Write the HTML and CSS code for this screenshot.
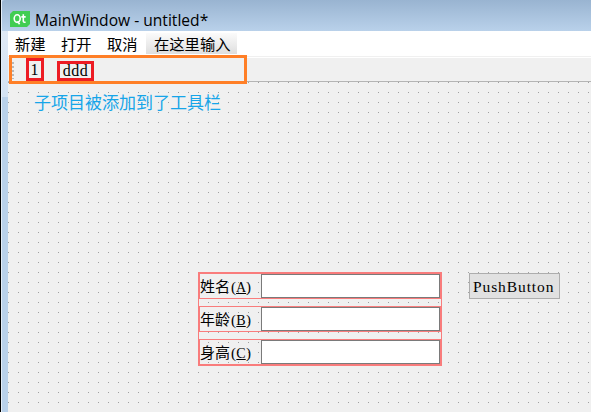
FILE: index.html
```
<!DOCTYPE html>
<html lang="zh-CN">
<head>
<meta charset="utf-8">
<title>MainWindow</title>
<link rel="stylesheet" href="styles.css">
</head>
<body>
<div class="window">
  <header class="titlebar">
    <svg class="logo" width="20" height="16" viewBox="0 0 20 16"><path d="M3 0H20V13L17 16H0V3Z" fill="#41cd52"/><g fill="none" stroke="#fff" stroke-width="1.6"><ellipse cx="7.2" cy="7.6" rx="3" ry="3.8"/><path d="M7.6 10.2L9.6 13.2M13.3 3.2V10Q13.3 11.5 15.6 11.3M11.3 5.9H15.7"/></g></svg>
    <span class="title">MainWindow - untitled*</span>
  </header>
  <div class="frame">
    <nav class="menubar">
      <span class="menu m1">新建</span><span class="menu m2">打开</span><span class="menu m3">取消</span><span class="type-here"><span class="menu">在这里输入</span></span>
    </nav>
    <div class="toolbar">
      <i class="grip"></i>
      <div class="outline"></div>
      <span class="action one">1</span>
      <span class="action ddd">ddd</span>
    </div>
    <main class="canvas">
      <svg class="dots" width="583" height="330" shape-rendering="crispEdges"><defs><pattern id="grid" width="10" height="10" patternUnits="userSpaceOnUse"><rect width="1" height="1" fill="#a0a0a0"/></pattern></defs><rect width="583" height="330" fill="url(#grid)"/></svg>
      <p class="note">子项目被添加到了工具栏</p>
      <div class="form">
        <div class="row"><label>姓名<span class="key">(<u>A</u>)</span></label><div class="field"></div></div>
        <div class="row"><label>年龄<span class="key">(<u>B</u>)</span></label><div class="field"></div></div>
        <div class="row"><label>身高<span class="key">(<u>C</u>)</span></label><div class="field"></div></div>
      </div>
      <div class="push">PushButton</div>
    </main>
  </div>
</div>
</body>
</html>
```
FILE: styles.css
```
* { box-sizing: border-box; }
body { margin: 0; overflow: hidden; color: #000; }
.window {
  width: 591px; height: 412px; display: flex; flex-direction: column;
  background: linear-gradient(#dfe9f5, #d3e2f3) 1px 31px / 6px 66px no-repeat, #b9d1ea;
  border-left: 1px solid #000; box-shadow: inset 1px 0 #e4eef8;
}
.titlebar {
  height: 31px; flex: none; display: flex; align-items: flex-start;
  padding: 11px 0 0 9px; margin-left: 1px;
  background: linear-gradient(#99b4d1, #b9d1ea); border-top-left-radius: 3px;
}
.logo { display: block; flex: none; margin-left: -1px; }
.title {
  font: 15.6px/20px "Open Sans", "Noto Sans", sans-serif;
  margin: -1px 0 0 5px; white-space: nowrap;
}
.frame { flex: 1; margin-left: 7px; display: flex; flex-direction: column; }
.menubar {
  height: 27px; flex: none; display: flex; padding: 2px 0 0 7px;
  background: linear-gradient(#f0f0f0, #f0f0f0) 0 25px / 100% 1px no-repeat, #fff;
}
.menu {
  font: 15.3px/21px "Noto Sans CJK SC", sans-serif; white-space: nowrap;
}
.m1, .m2, .m3 { width: 46px; }
.type-here {
  width: 91px; height: 21px; padding-left: 8px; margin-left: -7px;
  background: linear-gradient(#fbfbfb, #dedede);
}
.type-here .menu { display: block; line-height: 20px; }
.toolbar {
  height: 24px; flex: none; position: relative; background: #f0f0f0;
  border-bottom: 1px solid #b4b4b4;
}
.grip {
  position: absolute; left: 4px; top: 4px; width: 2px; height: 17px;
  background: repeating-linear-gradient(#b8b8b8 0 2px, #f0f0f0 2px 4px);
}
.outline {
  position: absolute; z-index: 1; left: 1px; top: -3px; width: 238px; height: 29px;
  border: 3px solid #ff7f27;
}
.action {
  position: absolute; z-index: 2; border: 3px solid #ed1c24;
  font: 16px/18px "Liberation Serif", serif; text-align: center;
}
.one { left: 18px; top: 0; width: 18px; height: 23px; padding-right: 1px; }
.ddd { left: 49px; top: 3px; width: 37px; height: 20px; line-height: 13px; letter-spacing: 0.5px; }
.canvas { flex: 1; position: relative; background: #f0f0f0; }
.dots { position: absolute; left: 0; top: 0; }
.note {
  position: absolute; left: 26px; top: 7px; margin: 0; white-space: nowrap;
  font: 17px/25px "Noto Sans CJK SC", sans-serif; color: #16a5e9;
}
.form {
  position: absolute; left: 190px; top: 190px; width: 244px; height: 94px;
  border: 1px solid #f97c7c; display: flex; flex-direction: column; gap: 7px;
}
.row { height: 26px; border: 1px solid #f97c7c; display: flex; }
.row label {
  width: 61px; flex: none; white-space: nowrap;
  font: 15px/23px "Noto Sans CJK SC", sans-serif;
}
.key {
  font-family: "Liberation Serif", serif; font-size: 15px;
  display: inline-flex; padding-left: 1px;
}
.key u { width: 10px; display: inline-block; text-align: center; font-size: 14px; }
.field { flex: 1; background: #fff; border: 1px solid #7a7a7a; }
.push {
  position: absolute; left: 461px; top: 191px; width: 91px; height: 26px;
  border: 1px solid #adadad; background: #e1e1e1; padding-left: 3px; white-space: nowrap;
  font: 15.5px/26px "Liberation Serif", serif; letter-spacing: 0.9px;
}
```
